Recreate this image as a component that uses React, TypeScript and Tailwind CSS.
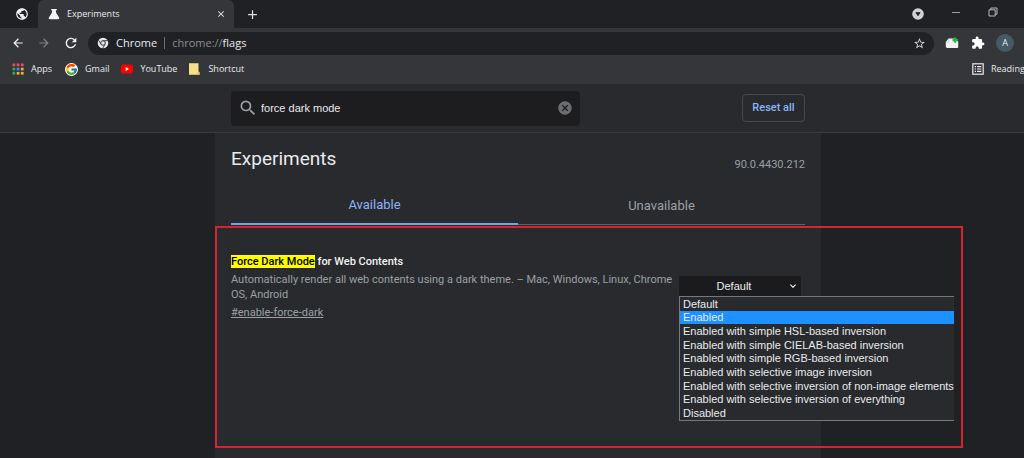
import React from "react";
import { FcGoogle } from "react-icons/fc";
import {
  MdArrowBack,
  MdArrowForward,
  MdRefresh,
  MdClose,
  MdAdd,
  MdStarBorder,
  MdExtension,
  MdSearch,
  MdPublic,
  MdCancel,
  MdExpandMore,
} from "react-icons/md";

const options = [
  "Default",
  "Enabled",
  "Enabled with simple HSL-based inversion",
  "Enabled with simple CIELAB-based inversion",
  "Enabled with simple RGB-based inversion",
  "Enabled with selective image inversion",
  "Enabled with selective inversion of non-image elements",
  "Enabled with selective inversion of everything",
  "Disabled",
];

const appColors = [
  "#e0525f", "#e0525f", "#e0525f",
  "#34a85a", "#4a8af0", "#f0b429",
  "#34a85a", "#f0b429", "#f0b429",
];

function AppsIcon() {
  return (
    <svg viewBox="0 0 12 12" className="size-3" aria-hidden="true">
      {appColors.map((c, i) => (
        <rect key={i} x={0.5 + (i % 3) * 4.2} y={0.5 + Math.floor(i / 3) * 4.2} width="2.7" height="2.7" fill={c} />
      ))}
    </svg>
  );
}

function FlaskIcon() {
  return (
    <svg viewBox="0 0 12 12" className="size-3" fill="#f1f3f4" aria-hidden="true">
      <path d="M3.2 1h5.6v1.3H8v2.3l3.1 5c.5.9.1 1.7-.9 1.7H1.8c-1 0-1.4-.8-.9-1.7l3.1-5V2.3h-.8z" />
    </svg>
  );
}

function ChromeIcon() {
  return (
    <svg viewBox="0 0 12 12" className="size-3" aria-hidden="true">
      <circle cx="6" cy="6" r="5.3" fill="#e8eaed" />
      <circle cx="6" cy="6" r="2.3" fill="#e8eaed" stroke="#35363a" strokeWidth="1" />
      <path d="M6 3.7h5M4 7.2 1.6 3.2M8 7.2 5.8 11.2" stroke="#35363a" strokeWidth=".9" />
    </svg>
  );
}

function YouTubeIcon() {
  return (
    <svg viewBox="0 0 12 12" className="size-3" aria-hidden="true">
      <rect y="1.4" width="12" height="9.2" rx="2" fill="#f00" />
      <path d="M4.7 4v4L8.2 6z" fill="#fff" />
    </svg>
  );
}

function NoteIcon() {
  return (
    <svg viewBox="0 0 12 12" className="size-3" aria-hidden="true">
      <path d="M0 .3h9.5v8.2l1 .8v2.4H0z" fill="#f7e08a" />
      <path d="M7.8 11.7V9.5l1.7-1 1 .9v2.3z" fill="#e6c55c" />
    </svg>
  );
}

function NotesCardIcon() {
  return (
    <svg viewBox="0 0 14 14" className="size-3.5" aria-hidden="true">
      <path d="M3.5 2.5H10l3.2 3v5.4q0 1-1 1H2.4Q.8 11.9.8 10.5V6z" fill="#f1f3f4" />
      <path d="M1 6.2h2.8V2.8" fill="none" stroke="#c3c7ca" strokeWidth=".7" />
      <path d="M10.2 1.4v5.4M7.5 4.1h5.4" stroke="#2fb344" strokeWidth="2.2" />
    </svg>
  );
}

function ReadingListIcon() {
  return (
    <svg viewBox="0 0 12 12" className="size-3" fill="none" stroke="#e8eaed" aria-hidden="true">
      <rect x=".8" y=".8" width="10.4" height="10.4" strokeWidth="1.2" />
      <path d="M2.7 3.6h1.3M5 3.6h4.3M2.7 6h1.3M5 6h4.3M2.7 8.4h1.3M5 8.4h4.3" strokeWidth="1.2" />
    </svg>
  );
}

function DropCircleIcon() {
  return (
    <svg viewBox="0 0 12 12" className="size-3" aria-hidden="true">
      <circle cx="6" cy="6" r="5.8" fill="#cfd1d3" />
      <path d="M3.9 4.6h4.2L6 7.8z" fill="#202124" stroke="#202124" strokeWidth=".8" strokeLinejoin="round" />
    </svg>
  );
}

function RestoreIcon() {
  return (
    <svg viewBox="0 0 10 10" className="size-2.5" fill="none" stroke="#b8b9bb" aria-hidden="true">
      <path d="M1 2.8h6.2V9H1zM2.8 2.8V1H9v6.2H7.2" strokeWidth="1" />
    </svg>
  );
}

function TabStrip() {
  return (
    <div className="flex h-7 items-stretch bg-[#202124]">
      <button aria-label="Pinned tab" className="flex w-[38px] items-center justify-end pr-[9px]">
        <MdPublic className="size-3.5 text-[#f1f3f4]" />
      </button>
      <div className="flex w-[196px] items-center rounded-t-md bg-[#35363a] pr-2 pl-2.5">
        <FlaskIcon />
        <span className="ml-[7px] flex-1 text-[9px]">Experiments</span>
        <button aria-label="Close tab"><MdClose className="size-2.5 text-[#f1f3f4]" /></button>
      </div>
      <button aria-label="New tab" className="ml-[11px]"><MdAdd className="size-[15px] text-[#e0e1e3]" /></button>
      <div className="ml-auto flex items-center pr-[26px]">
        <button aria-label="Search tabs"><DropCircleIcon /></button>
        <button aria-label="Minimize" className="ml-7 flex h-3 w-2 items-center pb-1"><span className="h-px w-2 bg-[#9a9b9d]" /></button>
        <button aria-label="Restore" className="ml-7 pb-1"><RestoreIcon /></button>
      </div>
    </div>
  );
}

function Toolbar() {
  return (
    <div className="flex h-[30px] items-center bg-[#35363a] pr-2.5 pl-[11px]">
      <button aria-label="Back"><MdArrowBack className="size-3.5 text-[#f1f3f4]" /></button>
      <button aria-label="Forward" className="ml-3"><MdArrowForward className="size-3.5 text-[#808286]" /></button>
      <button aria-label="Reload" className="ml-3"><MdRefresh className="size-4 text-[#f1f3f4]" /></button>
      <div className="ml-[9px] flex h-[23px] flex-1 items-center rounded-full bg-[#202124] pr-2 pl-[9px] text-[11px]">
        <ChromeIcon />
        <span className="ml-[7px]">Chrome</span>
        <span className="mx-[7px] h-3 w-px bg-[#6b6d70]" />
        <span className="text-[#8b8e92]">chrome://<span className="text-[#e8eaed]">flags</span></span>
        <button aria-label="Bookmark this tab" className="ml-auto"><MdStarBorder className="size-[13px] text-[#d5d7da]" /></button>
      </div>
      <button aria-label="Save to notes" className="ml-[11px]"><NotesCardIcon /></button>
      <button aria-label="Extensions" className="ml-3"><MdExtension className="size-3.5 text-white" /></button>
      <button aria-label="Profile" className="ml-[11px] flex size-[18px] items-center justify-center rounded-full bg-[#455a64] text-[9px]">A</button>
    </div>
  );
}

function Bookmarks() {
  return (
    <nav className="flex h-[26px] items-center overflow-hidden bg-[#35363a] pb-1 pl-3 text-[9px] whitespace-nowrap">
      <a href="#apps" className="flex items-center gap-[7px]"><AppsIcon />Apps</a>
      <a href="#gmail" className="ml-[13px] flex items-center gap-[7px]"><FcGoogle className="size-[13px] rounded-full bg-white" />Gmail</a>
      <a href="#youtube" className="ml-3 flex items-center gap-[7px]"><YouTubeIcon />YouTube</a>
      <a href="#shortcut" className="ml-3 flex items-center gap-[7px]"><NoteIcon />Shortcut</a>
      <div className="ml-auto flex w-[62px] shrink-0 items-center">
        <span className="h-3 w-px bg-[#5b5d61]" />
        <a href="#reading" className="ml-2.5 flex items-center gap-[7px]"><ReadingListIcon />Reading</a>
      </div>
    </nav>
  );
}

function Header() {
  return (
    <header className="flex h-[49px] justify-center border-b border-[#3c3d40] bg-[#292a2d] pl-3">
      <div className="flex w-full max-w-[606px] items-center justify-between px-4">
        <label className="flex h-[35px] w-[349px] items-center rounded-sm bg-[#1d1d20] px-[7px]">
          <MdSearch className="size-5 text-[#9aa0a6]" />
          <input
            aria-label="Search flags"
            defaultValue="force dark mode"
            className="ml-[3px] min-w-0 flex-1 bg-transparent font-['Liberation_Sans',sans-serif] text-[11px] outline-none"
          />
          <button aria-label="Clear search"><MdCancel className="size-4 text-[#6b6d71]" /></button>
        </label>
        <button className="h-7 w-[63px] rounded-sm border border-[#48494c] text-[11px] font-medium text-[#8ab4f8]">Reset all</button>
      </div>
    </header>
  );
}

function FlagSelect() {
  return (
    <div className="relative w-[122px] font-['Liberation_Sans',sans-serif] text-[11px]">
      <select
        aria-label="Force Dark Mode for Web Contents"
        defaultValue="Default"
        className="block h-5 w-full appearance-none bg-[#1b1b1e] pr-3 outline-none [text-align-last:center]"
      >
        {options.map((o) => <option key={o}>{o}</option>)}
      </select>
      <MdExpandMore className="pointer-events-none absolute top-1 right-0.5 size-3 text-white" />
      <ul role="listbox" aria-label="Choices" className="absolute top-5 left-0 z-10 grid h-[125px] w-[275px] grid-rows-9 border-y border-l border-[#77787b] bg-[#292a2d]">
        {options.map((o) => (
          <li
            key={o}
            role="option"
            aria-selected={o === "Enabled"}
            className="flex min-h-0 items-center pl-[3px] leading-3 whitespace-nowrap aria-selected:bg-[#1e90ff]"
          >
            {o}
          </li>
        ))}
      </ul>
    </div>
  );
}

function Experiments() {
  return (
    <main className="flex flex-1 justify-center pl-3">
      <div className="w-full max-w-[606px] bg-[#292a2d] px-4">
        <div className="flex h-[50px] items-start justify-between pt-3.5">
          <h1 className="text-[19px] leading-6">Experiments</h1>
          <span className="pt-1.5 text-[11px] leading-6 text-[#9aa0a6]">90.0.4430.212</span>
        </div>
        <div role="tablist" className="flex text-[13px]">
          <button role="tab" aria-selected="true" className="h-[42px] flex-1 border-b-2 border-[#7ba0dc] pt-1 text-[#8ab4f8]">Available</button>
          <button role="tab" aria-selected="false" className="h-[42px] flex-1 border-b border-[#5f6368] pt-1 text-[#9aa0a6]">Unavailable</button>
        </div>
        <section className="flex items-start justify-between pt-[29px]">
          <div className="w-[446px] shrink-0 text-[11px] leading-[15px] text-[#9aa0a6]">
            <h2 className="font-medium text-[#f1f3f4]"><mark className="bg-[#ffff00] text-black">Force Dark Mode</mark> for Web Contents</h2>
            <p className="mt-[3px]">Automatically render all web contents using a dark theme. – Mac, Windows, Linux, Chrome OS, Android</p>
            <a href="#enable-force-dark" className="mt-[3px] inline-block underline">#enable-force-dark</a>
          </div>
          <div className="ml-auto pt-[22px] pr-1"><FlagSelect /></div>
        </section>
      </div>
    </main>
  );
}

export default function App() {
  return (
    <div className="relative flex min-h-screen flex-col overflow-hidden bg-[#202124] font-[Roboto,sans-serif] text-[#e8eaed]">
      <div className="font-['Open_Sans',sans-serif]">
        <TabStrip />
        <Toolbar />
        <Bookmarks />
      </div>
      <Header />
      <Experiments />
      <div className="pointer-events-none absolute top-[226px] left-[215px] z-20 h-[222px] w-[748px] border-2 border-[#d3242f]" />
    </div>
  );
}
